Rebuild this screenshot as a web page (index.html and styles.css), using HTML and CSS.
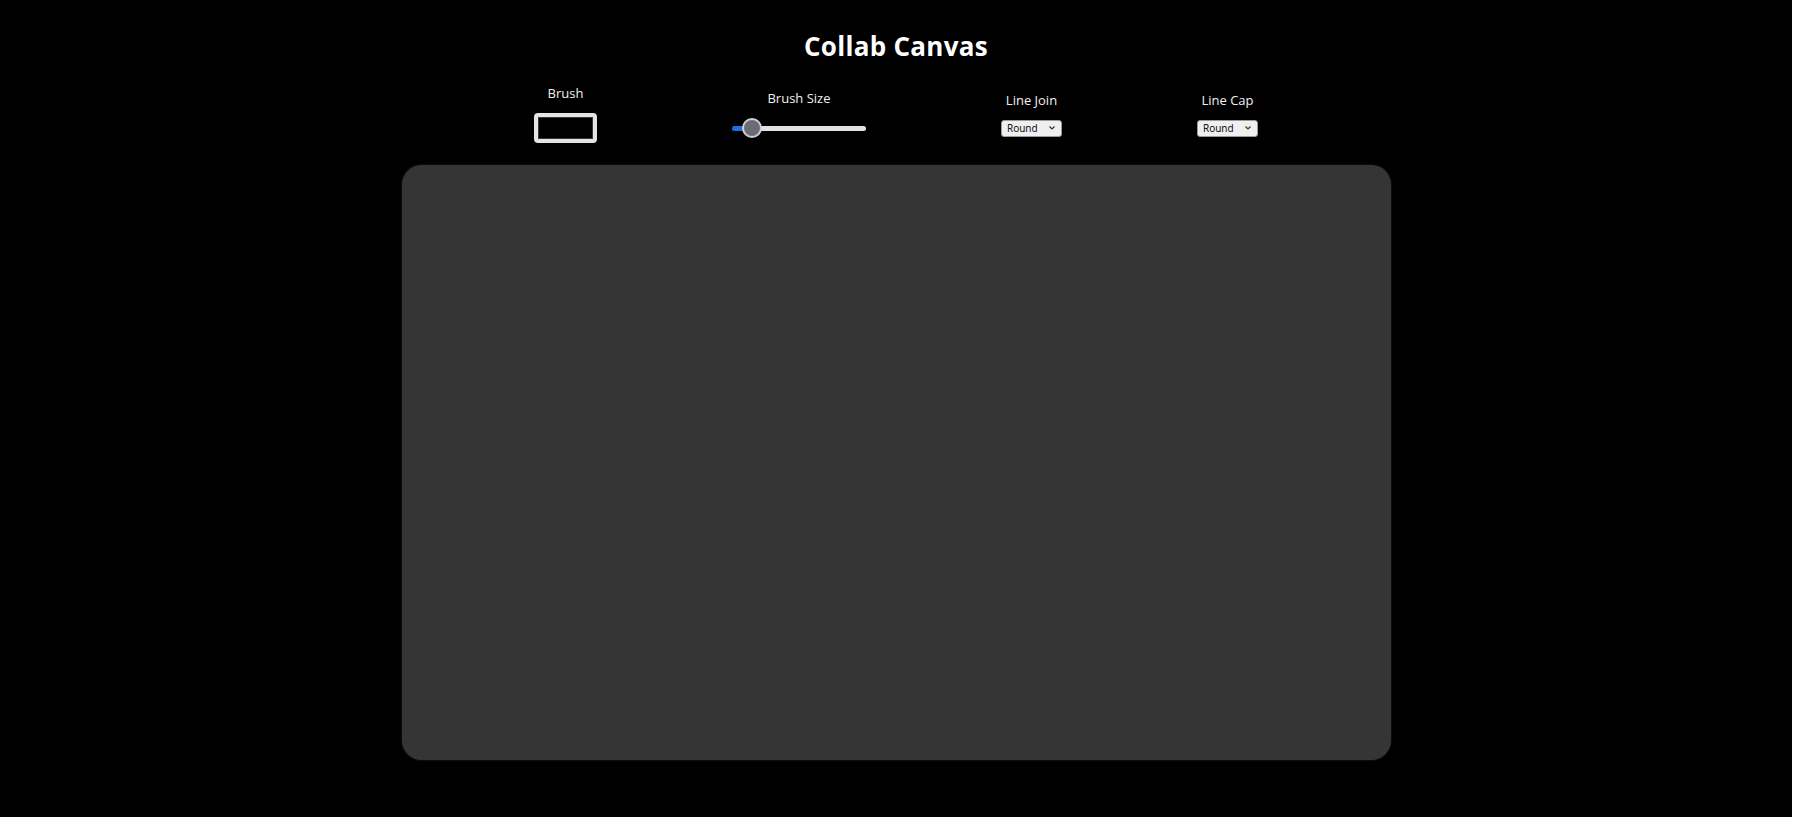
FILE: index.html
```html
<!DOCTYPE html>
<html lang="en">
<head>
<meta charset="utf-8">
<title>Collab Canvas</title>
<link rel="stylesheet" href="styles.css">
</head>
<body>
<div class="app">
  <h1 class="title">Collab Canvas</h1>
  <div class="toolbar">
    <div class="control">
      <label class="control-label" for="brush">Brush</label>
      <input class="color-input" id="brush" type="color" value="#000000">
    </div>
    <div class="control">
      <label class="control-label" for="size">Brush Size</label>
      <input class="range-input" id="size" type="range" min="1" max="100" value="10">
    </div>
    <div class="control">
      <label class="control-label" for="join">Line Join</label>
      <select class="select-input" id="join">
        <option>Round</option>
        <option>Bevel</option>
        <option>Miter</option>
      </select>
    </div>
    <div class="control">
      <label class="control-label" for="cap">Line Cap</label>
      <select class="select-input" id="cap">
        <option>Round</option>
        <option>Butt</option>
        <option>Square</option>
      </select>
    </div>
  </div>
  <div class="canvas"></div>
</div>
</body>
</html>
```

FILE: styles.css
```css
html, body {
  margin: 0;
  padding: 0;
  background: #ffffff;
}

.app {
  width: 1792px;
  height: 817px;
  background: #000000;
  display: flex;
  flex-direction: column;
  align-items: center;
  font-family: "Comic Sans MS", "Open Sans", sans-serif;
  color: #f2f2f2;
  overflow: hidden;
}

.title {
  margin: 28px 0 0 0;
  font-size: 26px;
  font-weight: 700;
  line-height: 36px;
  color: #ffffff;
  letter-spacing: 0.3px;
}

.toolbar {
  margin-top: 20px;
  display: flex;
  align-items: center;
  gap: 135px;
}

.control {
  display: flex;
  flex-direction: column;
  align-items: center;
  gap: 10px;
}

.control-label {
  font-size: 13px;
  line-height: 19px;
  color: #f0f0f0;
}

.color-input {
  -webkit-appearance: none;
  appearance: none;
  width: 63px;
  height: 30px;
  box-sizing: border-box;
  border: 4px solid #e4e4e4;
  border-radius: 4px;
  background: #000000;
  padding: 0;
  margin: 0;
}
.color-input::-webkit-color-swatch-wrapper {
  padding: 0;
}
.color-input::-webkit-color-swatch {
  border: 1px solid #3a3a3a;
  border-radius: 0;
}

.range-input {
  -webkit-appearance: none;
  appearance: none;
  width: 134px;
  height: 20px;
  margin: 0;
  background: transparent;
}
.range-input::-webkit-slider-runnable-track {
  height: 5px;
  border-radius: 3px;
  background: linear-gradient(to right, #1f6fe0 0 9%, #e2e2e2 9% 100%);
}
.range-input::-webkit-slider-thumb {
  -webkit-appearance: none;
  appearance: none;
  width: 20px;
  height: 20px;
  margin-top: -7.5px;
  border-radius: 50%;
  background: #6c6c76;
  border: 2px solid #cfcfcf;
  box-sizing: border-box;
}

.select-input {
  -webkit-appearance: none;
  appearance: none;
  width: 61px;
  height: 17px;
  box-sizing: border-box;
  font-family: inherit;
  font-size: 10px;
  line-height: 15px;
  padding: 0 14px 0 5px;
  margin: 0;
  border: 1px solid #9a9a9a;
  border-radius: 3px;
  background-color: #efefef;
  background-image: url("data:image/svg+xml,%3Csvg xmlns='http://www.w3.org/2000/svg' width='8' height='6' viewBox='0 0 8 6'%3E%3Cpath d='M1.5 1.5 L4 4 L6.5 1.5' fill='none' stroke='%23333' stroke-width='1.2'/%3E%3C/svg%3E");
  background-repeat: no-repeat;
  background-position: right 5px center;
  background-size: 8px 6px;
  color: #000000;
}

.canvas {
  margin-top: 22px;
  width: 989px;
  height: 595px;
  background: #353535;
  border-radius: 20px;
  box-shadow: 0 0 2px rgba(80, 80, 80, 0.6);
}
```
